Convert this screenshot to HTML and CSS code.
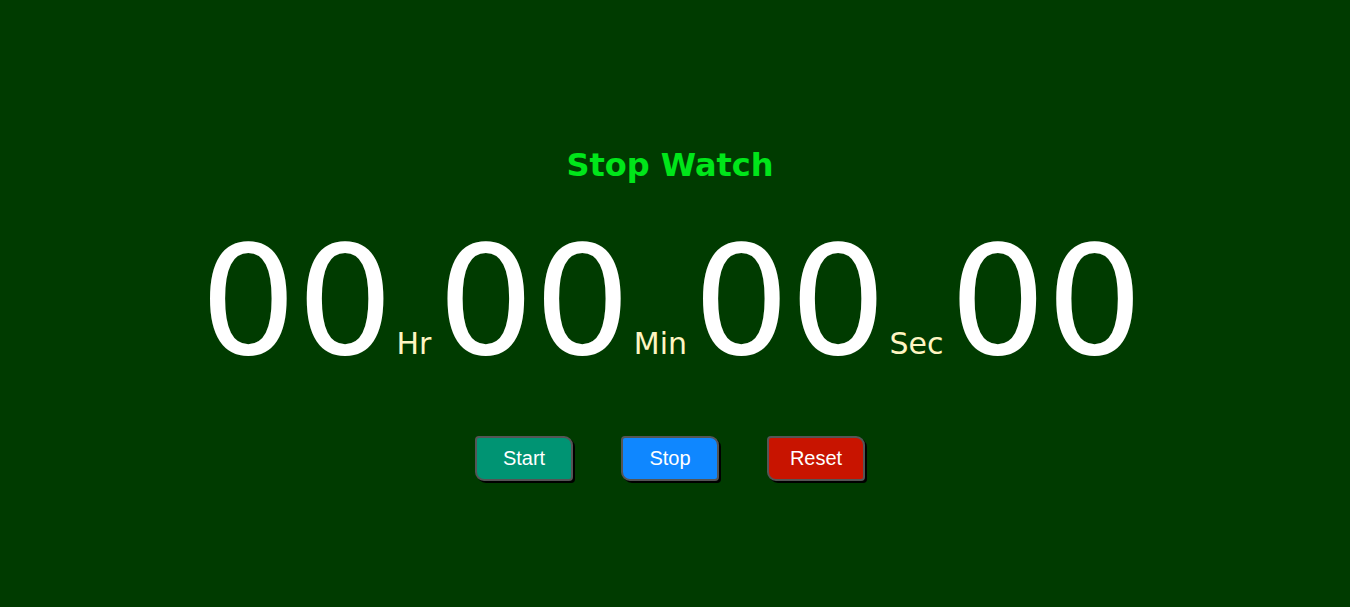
FILE: index.html
```html
<!DOCTYPE html>
<html>
<head>
<meta charset="utf-8">
<title>Stop Watch</title>
<link rel="stylesheet" href="styles.css">
</head>
<body>
<main class="watch">
  <h1 class="title">Stop Watch</h1>
  <div class="display">
    <span class="digits">00</span><span class="unit">Hr</span>
    <span class="digits">00</span><span class="unit">Min</span>
    <span class="digits">00</span><span class="unit">Sec</span>
    <span class="digits">00</span>
  </div>
  <div class="controls">
    <button class="btn btn-start">Start</button>
    <button class="btn btn-stop">Stop</button>
    <button class="btn btn-reset">Reset</button>
  </div>
</main>
</body>
</html>
```
FILE: styles.css
```css
html, body {
  margin: 0;
  padding: 0;
  background: #003b00;
  height: 100%;
}
body {
  font-family: "DejaVu Sans", Verdana, sans-serif;
}
.watch {
  display: flex;
  flex-direction: column;
  align-items: center;
  padding-top: 147px;
  padding-right: 10px;
}
.title {
  margin: 0;
  font-size: 32px;
  font-weight: bold;
  color: #00e61a;
  line-height: 37px;
}
.display {
  display: flex;
  align-items: baseline;
  margin-top: 42px;
  margin-left: 3px;
  line-height: 1;
}
.digits {
  font-size: 152px;
  color: #ffffff;
  line-height: 152px;
}
.unit {
  font-size: 30px;
  color: #fff5c2;
  line-height: 30px;
  margin: 0 6px 0 3px;
}
.controls {
  display: flex;
  gap: 48px;
  margin-top: 58px;
}
.btn {
  width: 98px;
  height: 45px;
  box-sizing: border-box;
  border: 2px solid #555555;
  border-radius: 4px 9px 4px 9px;
  box-shadow: 2px 2px 0 #000000;
  color: #ffffff;
  font-family: "Liberation Sans", Arial, sans-serif;
  font-size: 20px;
  padding: 0;
  cursor: pointer;
}
.btn-start { background: #009473; }
.btn-stop { background: #0f87ff; }
.btn-reset { background: #c81400; }
```
